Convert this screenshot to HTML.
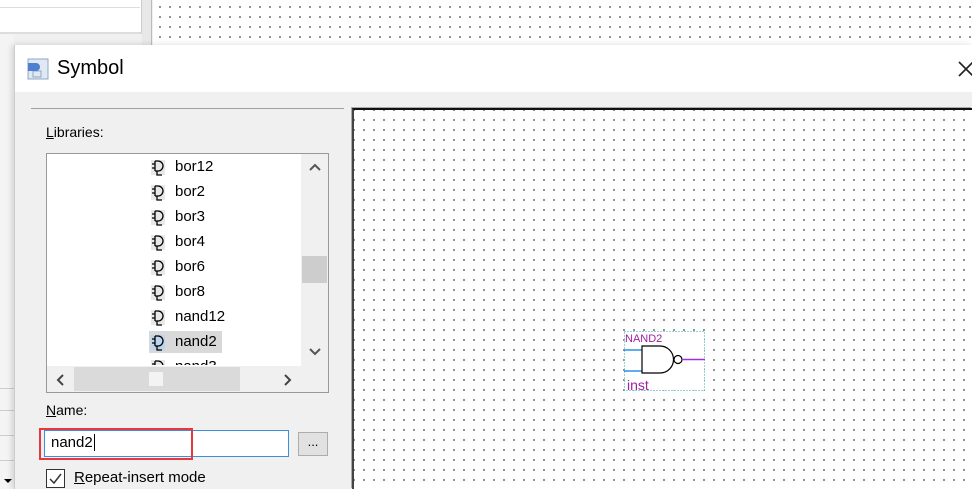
<!DOCTYPE html>
<html><head><style>
*{margin:0;padding:0;box-sizing:border-box}
body{width:972px;height:489px;overflow:hidden;background:#f0f0f0;font-family:"Segoe UI","Liberation Sans",sans-serif;position:relative}
.abs{position:absolute}
.dots{background-color:#fff;background-image:radial-gradient(circle,#777 0.9px,transparent 1.1px);background-size:10px 10px}
.item{position:absolute;left:0;height:22px;font-size:15px;color:#000;line-height:22px}
</style></head><body>
<div class="abs" style="left:0;top:0;width:142px;height:34px;background:#fff;border-right:1px solid #ccc;border-bottom:2px solid #ddd"></div>
<div class="abs" style="left:0;top:7px;width:140px;height:1px;background:#ddd"></div>
<div class="abs" style="left:142px;top:0;width:10px;height:45px;background:#e8e8e8;border-right:1px solid #bbb"></div>
<div class="abs dots" style="left:153px;top:0;width:819px;height:45px;background-position:2px 2px"></div>
<div class="abs" style="left:0;top:34px;width:14px;height:455px;background:#f4f4f4"></div>
<div class="abs" style="left:0;top:388px;width:14px;height:1px;background:#ccc"></div>
<div class="abs" style="left:0;top:410px;width:14px;height:1px;background:#ccc"></div>
<div class="abs" style="left:0;top:435px;width:14px;height:1px;background:#ccc"></div>
<div class="abs" style="left:0;top:460px;width:14px;height:1px;background:#ccc"></div>
<div class="abs" style="left:4px;top:479px;width:0;height:0;border-left:4px solid transparent;border-right:4px solid transparent;border-top:4px solid #000"></div>
<div class="abs" style="left:14px;top:45px;width:958px;height:444px;background:#f0f0f0;border-left:1px solid #ccc;box-shadow:-2px 0 6px rgba(0,0,0,.15)"></div>
<div class="abs" style="left:15px;top:45px;width:957px;height:47px;background:#fff"></div>
<svg class="abs" style="left:26px;top:57px" width="24" height="24" viewBox="0 0 24 24">
<rect x="2" y="2" width="20" height="20" fill="#dfe8f3" stroke="#8fa6c4"/>
<rect x="7" y="14" width="8" height="6" fill="none" stroke="#8fa6c4"/>
<path d="M2 6h8a4 4 0 0 1 0 8H2z" fill="#4f7fd0"/>
</svg>
<div class="abs" style="left:57px;top:57px;font-size:20px;color:#000">Symbol</div>
<svg class="abs" style="left:958px;top:61px" width="16" height="16" viewBox="0 0 16 16"><path d="M1 1L15 15M15 1L1 15" stroke="#222" stroke-width="1.6"/></svg>
<div class="abs" style="left:31px;top:108px;width:313px;height:1px;background:#a0a0a0"></div>
<div class="abs" style="left:46px;top:124px;font-size:14px"><u>L</u>ibraries:</div>
<div class="abs" style="left:46px;top:153px;width:283px;height:240px;background:#fff;border:1px solid #999;overflow:hidden">
 <div class="abs" style="left:102px;top:177px;width:73px;height:22px;background:#d9d9d9"></div>
 <div class="abs" style="left:254px;top:0;width:28px;height:212px;background:#f0f0f0"></div>
 <div class="abs" style="left:255px;top:102px;width:25px;height:27px;background:#cdcdcd"></div>
 <svg class="abs" style="left:261px;top:8px" width="14" height="10" viewBox="0 0 14 10"><path d="M2 8L7 3L12 8" fill="none" stroke="#555" stroke-width="2"/></svg>
 <svg class="abs" style="left:261px;top:193px" width="14" height="10" viewBox="0 0 14 10"><path d="M2 2L7 7L12 2" fill="none" stroke="#555" stroke-width="2"/></svg>
 <div class="abs" style="left:0;top:212px;width:282px;height:26px;background:#f0f0f0"></div>
 <div class="abs" style="left:27px;top:213px;width:166px;height:24px;background:#dadada"></div>
 <div class="abs" style="left:102px;top:218px;width:14px;height:14px;background:#f3f3f3"></div>
 <svg class="abs" style="left:8px;top:219px" width="10" height="14" viewBox="0 0 10 14"><path d="M8 2L3 7L8 12" fill="none" stroke="#444" stroke-width="2"/></svg>
 <svg class="abs" style="left:236px;top:219px" width="10" height="14" viewBox="0 0 10 14"><path d="M2 2L7 7L2 12" fill="none" stroke="#444" stroke-width="2"/></svg>
</div>
<div class="abs" style="left:46px;top:153px;width:255px;height:212px;overflow:hidden">
<script>
var n=["bor12","bor2","bor3","bor4","bor6","bor8","nand12","nand2","nand3"],h="";
for(var i=0;i<n.length;i++){var y=3+i*25;
h+='<svg style="position:absolute;left:104px;top:'+(y+3)+'px" width="16" height="17" viewBox="0 0 16 17"><rect x="1" y="1" width="14" height="15" fill="'+(i==7?'#bcd6ee':'#e8e8e8')+'"/><path d="M5 2v10 M5 2h3a5 5 0 0 1 0 10H5 M2 5h3 M2 9h3 M7 12v4h5" fill="none" stroke="#000" stroke-width="1.3"/></svg>';
h+='<div class="item" style="left:129px;top:'+y+'px">'+n[i]+'</div>';}
document.write(h);
</script>
</div>
<div class="abs" style="left:46px;top:402px;font-size:14px"><u>N</u>ame:</div>
<div class="abs" style="left:44px;top:430px;width:245px;height:27px;background:#fff;border:1px solid #3c8fdb"></div>
<div class="abs" style="left:39px;top:428px;width:154px;height:32px;border:2px solid #e8383d"></div>
<div class="abs" style="left:51px;top:434px;font-size:15px">nand2<span style="border-left:1px solid #000;margin-left:1px"></span></div>
<div class="abs" style="left:298px;top:432px;width:30px;height:24px;background:#e1e1e1;border:1px solid #adadad;font-size:13px;text-align:center;line-height:18px">...</div>
<div class="abs" style="left:46px;top:469px;width:19px;height:19px;background:#fff;border:1px solid #333"></div>
<svg class="abs" style="left:48px;top:472px" width="15" height="14" viewBox="0 0 15 14"><path d="M2 7L6 11L13 2" fill="none" stroke="#333" stroke-width="1.5"/></svg>
<div class="abs" style="left:74px;top:469px;font-size:15px"><u>R</u>epeat-insert mode</div>
<div class="abs" style="left:352px;top:108px;width:620px;height:381px;border-left:2px solid #444;border-top:2px solid #111;box-shadow:-1px -1px 0 #aaa"></div>
<div class="abs dots" style="left:354px;top:110px;width:618px;height:379px;background-position:5px 5px"></div>
<svg class="abs" style="left:620px;top:328px" width="90" height="66" viewBox="0 0 90 66">
<rect x="4.5" y="3.5" width="80" height="59" fill="#fff" stroke="#3aa" stroke-dasharray="1 2"/>
<text x="5" y="14" font-family="Liberation Sans" font-size="11" fill="#a020a0">NAND2</text>
<path d="M4 22h18 M4 43h18" stroke="#2f8fe8" stroke-width="1.5"/>
<path d="M22 18h18a13.5 13.5 0 0 1 0 27H22z" fill="#fff" stroke="#000" stroke-width="1.2"/>
<circle cx="58" cy="31.5" r="4" fill="#fff" stroke="#000" stroke-width="1.2"/>
<path d="M62 31.5h23" stroke="#9a30e0" stroke-width="1.5"/>
<text x="7" y="62" font-family="Liberation Sans" font-size="14" fill="#a020a0">inst</text>
</svg>
</body></html>
